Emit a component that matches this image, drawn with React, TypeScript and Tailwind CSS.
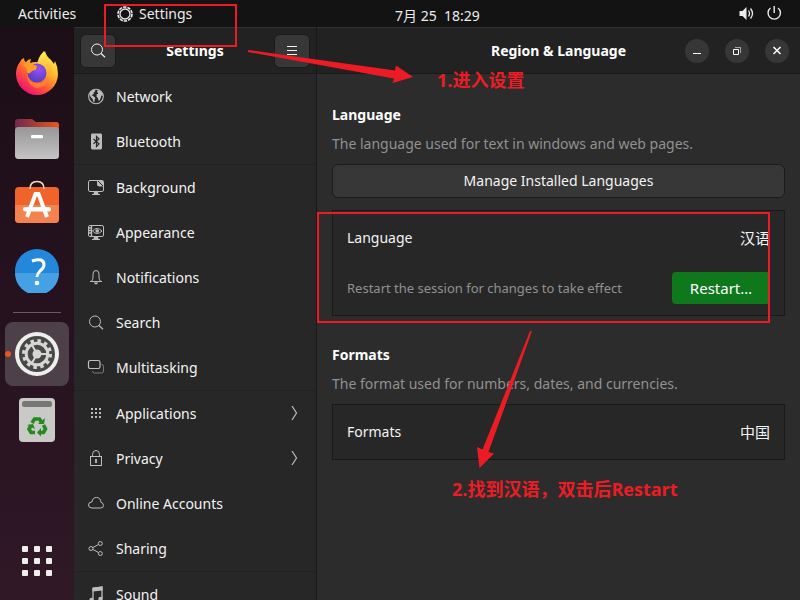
import React from "react";

type IconProps = { children: React.ReactNode; className?: string };

function Icon({ children, className = "" }: IconProps) {
  return (
    <svg
      viewBox="0 0 16 16"
      className={`size-4 shrink-0 ${className}`}
      fill="none"
      stroke="currentColor"
      strokeWidth="1"
      aria-hidden="true"
    >
      {children}
    </svg>
  );
}

const icons: Record<string, React.ReactNode> = {
  Network: (
    <>
      <circle cx="8" cy="7.5" r="7.3" strokeWidth="1.1" />
      <path
        fill="currentColor"
        stroke="none"
        d="M2.200 3 5 1 7.300 1.200 7 2.700 5.500 3.500 5.900 5 4.300 5.500 4.200 6.800 6.300 7.800 7.400 9.300 6.600 10.700 6.500 13 5.300 12.700 4.600 10 2.800 8.300 1.800 6ZM9 1.500 11.500 1.300 14.200 4 14.800 7 13.200 6.500 12.900 8.400 11.800 11.300 10.600 11.800 9.900 9 8.700 8 8.500 5.600 10.300 4.700 9.500 3.500Z"
      />
    </>
  ),
  Bluetooth: (
    <>
      <rect x="3" y="-.500" width="11" height="16" rx="1.400" fill="currentColor" stroke="none" />
      <path d="M5.500 5 11 9.800 8.500 12.500V2.500L11 5 5.500 9.800" stroke="#272727" strokeWidth="1.200" />
    </>
  ),
  Background: (
    <>
      <path d="M9 .5H2Q.5.5.5 2v8Q.5 11.500 2 11.500h12q1.500 0 1.500-1.500V6" />
      <path d="M9 0h4.500Q16 0 16 2.500V6.500H11.500Q9 6.500 9 4Z" fill="currentColor" stroke="none" />
      <path d="m10 1 5 5" stroke="#272727" />
      <path d="M6 12h4l.5 2H12v1H4v-1h1.500Z" fill="currentColor" stroke="none" />
    </>
  ),
  Appearance: (
    <>
      <rect x=".5" y=".5" width="15" height="11" rx="1.500" />
      <path d="M3.500 1v10M1 3h2.500M1 5.500h2.500M1 8h2.500" strokeWidth="1.300" />
      <path d="M4.500 6Q9 1 14 6 9 11 4.500 6Z" />
      <circle cx="9.200" cy="6" r="1.800" fill="currentColor" stroke="none" />
      <path d="M6 12h4l.5 2H12v1H4v-1h1.500Z" fill="currentColor" stroke="none" />
    </>
  ),
  Notifications: (
    <>
      <path d="M2 11.500h12M3.500 11.500Q5 9.500 5 7V4Q5 .5 8 .5t3 3.500v3q0 2.500 1.500 4.500" />
      <path d="M6 12.500h4Q9.500 14.500 8 14.500T6 12.500Z" fill="currentColor" stroke="none" />
    </>
  ),
  Search: (
    <>
      <circle cx="7" cy="6.500" r="5.500" />
      <path d="m11 10.500 4 3.800" strokeWidth="1.200" />
    </>
  ),
  Multitasking: (
    <>
      <rect x=".5" y=".5" width="11.500" height="8" rx="1.800" strokeWidth="1.200" />
      <path d="M13.500 4.500q2 0 2 2V11q0 2-2 2h-7q-2 0-2-2" opacity=".55" />
    </>
  ),
  Applications: (
    <path
      fill="currentColor"
      stroke="none"
      d="M3 2h2v2H3zM7 2h2v2H7zM11 2h2v2h-2zM3 6h2v2H3zM7 6h2v2H7zM11 6h2v2h-2zM3 10h2v2H3zM7 10h2v2H7zM11 10h2v2h-2z"
    />
  ),
  Privacy: (
    <>
      <path d="M4.500 5.500v-2Q4.500-.500 8-.500t3.500 4v2" />
      <rect x="2.500" y="5.500" width="11" height="9" />
      <path d="M8 8v4" strokeWidth="1.800" />
    </>
  ),
  "Online Accounts": (
    <path d="M4 12Q.5 12 .5 9 .5 6 4 5.900 4.500 1.500 8.500 1.500T13 6.300Q15.500 7 15.500 9.500T12.500 12Z" />
  ),
  Sharing: (
    <>
      <circle cx="3" cy="7.500" r="2" />
      <circle cx="12.300" cy="2.500" r="2" />
      <circle cx="12.300" cy="12.500" r="2" />
      <path d="m5 6.500 5.500-3M5 8.500l5.500 3" />
    </>
  ),
  Sound: (
    <>
      <path d="M5 1.500 14 0v12M5 1v12" strokeWidth="1.300" />
      <path d="M4.500.500 14.500-.500v4L4.500 4.500Z" fill="currentColor" stroke="none" />
      <circle cx="3.500" cy="13" r="2.200" fill="currentColor" stroke="none" />
      <circle cx="12.500" cy="12" r="2.200" fill="currentColor" stroke="none" />
    </>
  ),
};

const groups: string[][] = [
  ["Network", "Bluetooth"],
  ["Background", "Appearance", "Notifications", "Search", "Multitasking"],
  ["Applications", "Privacy", "Online Accounts", "Sharing"],
  ["Sound"],
];

const withSubmenu = ["Applications", "Privacy"];

function TopBar() {
  return (
    <header className="flex h-[27px] shrink-0 items-center bg-[#131313] pr-[18px] text-[#ececec]">
      <div className="flex w-[395px] items-center pl-[18px]">
        <button type="button" className="w-[99px] text-left">Activities</button>
        <button type="button" className="flex items-center gap-1.5">
          <Icon>
            <circle cx="8" cy="8" r="5" strokeWidth="1.300" />
            <circle cx="8" cy="8" r="7" strokeWidth="1.600" strokeDasharray="3.400 1" />
          </Icon>
          Settings
        </button>
      </div>
      <button type="button" className="whitespace-pre pt-1">7月 25  18:29</button>
      <button type="button" aria-label="System menu" className="ml-auto flex items-center gap-3">
        <Icon>
          <path d="M1.500 5h3l4-4v13l-4-4h-3Z" fill="currentColor" stroke="none" />
          <path d="M10.500 4.500q2 3 0 6M12.500 2.500q4 5 0 10" strokeWidth="1.300" />
        </Icon>
        <Icon>
          <path d="M4.500 2A6.200 6.200 0 1 0 12 2M8.200 0v7" strokeWidth="1.400" />
        </Icon>
      </button>
    </header>
  );
}

function FirefoxLogo() {
  return (
    <svg viewBox="0 0 44 44" className="size-11" aria-hidden="true">
      <defs>
        <linearGradient id="ffBody" x1=".85" y1=".1" x2=".25" y2=".95">
          <stop offset="0" stopColor="#fff04a" />
          <stop offset=".35" stopColor="#ffb22e" />
          <stop offset=".65" stopColor="#ff5b36" />
          <stop offset="1" stopColor="#ee1170" />
        </linearGradient>
        <radialGradient id="ffGlobe" cx=".6" cy=".3" r=".8">
          <stop offset="0" stopColor="#9b50f0" />
          <stop offset="1" stopColor="#4a3bc0" />
        </radialGradient>
        <linearGradient id="ffTail" x1=".5" y1="0" x2=".5" y2="1">
          <stop offset="0" stopColor="#fff251" />
          <stop offset="1" stopColor="#ff9f2c" />
        </linearGradient>
      </defs>
      <path
        d="M5 11q1-3 4-4 0 3 2 4 2-3 5-3l-1 4q6-2 10 0 0-7 5-12 1 5 6 9l3 4 1-3q3 6 3 13a21 21 0 0 1-42 0q0-7 4-12Z"
        fill="url(#ffBody)"
      />
      <path d="M29 0q0 6 5 10 4 4 3 10-3 7-9 6-3-5-6-11 0-8 7-15Z" fill="url(#ffTail)" />
      <circle cx="22" cy="22" r="9.500" fill="url(#ffGlobe)" />
      <path d="M8 14q5-4 14 1l-1 4q-4 0-6 3-3 1-3-1 1-4-4-7Z" fill="#ff9b27" />
      <path d="M12 22q1 10 11 10 8 0 11-6-1 10-12 11-10-2-10-15Z" fill="#ff8731" opacity=".8" />
    </svg>
  );
}

function FilesLogo() {
  return (
    <svg viewBox="0 0 44 44" className="size-11" aria-hidden="true">
      <defs>
        <linearGradient id="filesBack">
          <stop offset="0" stopColor="#6f2850" />
          <stop offset="1" stopColor="#ea561e" />
        </linearGradient>
        <linearGradient id="filesFront" x2="0" y2="1">
          <stop offset="0" stopColor="#979797" />
          <stop offset="1" stopColor="#c4c4c4" />
        </linearGradient>
      </defs>
      <path d="M0 16V5Q0 2 3 2h14l4 3h20q3 0 3 3v8Z" fill="url(#filesBack)" />
      <rect y="10" width="44" height="32" rx="3.500" fill="url(#filesFront)" />
      <rect x="16" y="18" width="12" height="3.200" rx="1" fill="#fff" />
    </svg>
  );
}

function SoftwareLogo() {
  return (
    <svg viewBox="0 0 44 44" className="size-11 overflow-visible" aria-hidden="true">
      <rect y="4" width="44" height="36" rx="4" fill="#f0642b" />
      <path d="M0 22h44v14q0 4-4 4H4q-4 0-4-4Z" fill="#f3824f" />
      <path d="M15 6Q15-1.500 22-1.500T29 6" fill="none" stroke="#f7d9b5" strokeWidth="1.600" />
      <path d="M12 34 20.500 11h3L32 34" fill="none" stroke="#fff" strokeWidth="4" />
      <rect x="8" y="24" width="28" height="4.500" rx="2" fill="#fff" />
    </svg>
  );
}

function HelpLogo() {
  return (
    <svg viewBox="0 0 44 44" className="size-11" aria-hidden="true">
      <circle cx="22" cy="22" r="22" fill="#2388da" />
      <path d="M0 24h44a22 22 0 0 1-44 0Z" fill="#45a0e4" />
      <path d="M17 12q12-4 12 4 0 3-4 6-3 3-3 6" fill="none" stroke="#fff" strokeWidth="3" />
      <circle cx="22" cy="34" r="2.300" fill="#fff" />
    </svg>
  );
}

function SettingsLogo() {
  return (
    <svg viewBox="0 0 44 44" className="size-11" aria-hidden="true">
      <circle cx="22" cy="22" r="22" fill="#eeeeec" />
      <circle cx="22" cy="22" r="18" fill="#484846" />
      <circle cx="22" cy="22" r="13.300" fill="none" stroke="#d6d6d4" strokeWidth="3.400" strokeDasharray="3.482 3.482" />
      <circle cx="22" cy="22" r="10.800" fill="none" stroke="#d6d6d4" strokeWidth="3" />
      <circle cx="22" cy="22" r="4.500" fill="#d6d6d4" />
      <path d="M22 22h10M22 22l-5-9M22 22l-5 9" stroke="#d6d6d4" strokeWidth="2" />
    </svg>
  );
}

function TrashLogo() {
  return (
    <svg viewBox="0 0 44 44" className="size-11" aria-hidden="true">
      <rect x="4" width="36" height="44" rx="4" fill="#c9c9c7" />
      <rect x="7" y="3" width="30" height="6" rx="2.500" fill="#777775" />
      <g fill="none" stroke="#26891f" strokeWidth="3.600">
        <path d="m17 25 2.500-4h5l2 3.500" />
        <path d="m28.500 27 2 4-2 3.500H25" />
        <path d="M20 34.500h-4l-2-3.500 2-3.500" />
      </g>
      <g fill="#26891f">
        <path d="m23 26 6 0 1-6Z" />
        <path d="m26 30-4 4.500 4 4Z" />
        <path d="m12 27 6-1 2 5Z" />
      </g>
    </svg>
  );
}

function DockItem({ label, children }: { label: string; children: React.ReactNode }) {
  return (
    <button type="button" aria-label={label} className="flex h-[66px] w-16 shrink-0 items-center justify-center">
      {children}
    </button>
  );
}

function Dock() {
  return (
    <nav
      aria-label="Dock"
      className="flex w-[74px] shrink-0 flex-col items-center bg-linear-to-b from-[#1b0e16] via-[#26121f] to-[#301827] pt-[13px]"
    >
      <DockItem label="Firefox"><FirefoxLogo /></DockItem>
      <DockItem label="Files"><FilesLogo /></DockItem>
      <DockItem label="Ubuntu Software"><SoftwareLogo /></DockItem>
      <DockItem label="Help"><HelpLogo /></DockItem>
      <div className="mt-2 mb-[9px] h-px w-12 bg-[#665b62]" />
      <button
        type="button"
        aria-label="Settings"
        className="relative mb-px flex size-16 shrink-0 items-center justify-center rounded-lg bg-[#4e4049]"
      >
        <span className="absolute left-0 size-1.5 rounded-full bg-[#e95420]" />
        <SettingsLogo />
      </button>
      <DockItem label="Trash"><TrashLogo /></DockItem>
      <button type="button" aria-label="Show applications" className="mt-auto mb-6 grid grid-cols-3 gap-1.5">
        {Array.from({ length: 9 }, (_, i) => (
          <span key={i} className="size-1.5 rounded-[1px] bg-[#eeeeec]" />
        ))}
      </button>
    </nav>
  );
}

const headerButton =
  "flex h-[34px] w-9 items-center justify-center rounded-md border border-[#1b1b1b] bg-[#373737] text-[#f1f1f1]";

function Sidebar() {
  return (
    <aside className="flex w-[243px] shrink-0 flex-col border-r border-[#191919] bg-[#272727]">
      <div className="flex h-[47px] shrink-0 items-center justify-between border-t border-b border-t-[#333333] border-b-[#191919] bg-[#222222] px-1.5">
        <button type="button" aria-label="Search" className={headerButton}>
          <Icon>{icons.Search}</Icon>
        </button>
        <h1 className="font-bold text-white">Settings</h1>
        <button type="button" aria-label="Menu" className={headerButton}>
          <Icon><path d="M3 3.500h10M3 7.500h10M3 11.500h10" /></Icon>
        </button>
      </div>
      <nav aria-label="Settings" className="min-h-0 flex-1 divide-y divide-[#222222] overflow-hidden">
        {groups.map((group) => (
          <ul key={group[0]}>
            {group.map((name) => (
              <li key={name}>
                <button type="button" className="flex h-[45px] w-full items-center gap-3 px-3.5 text-left text-[#f3f3f3]">
                  <Icon className="overflow-visible text-[#bdbdbd]">{icons[name]}</Icon>
                  <span className="flex-1">{name}</span>
                  {withSubmenu.includes(name) && (
                    <Icon className="text-[#bdbdbd]"><path d="m6 0 4.500 7L6 14" strokeWidth="1.200" /></Icon>
                  )}
                </button>
              </li>
            ))}
          </ul>
        ))}
      </nav>
    </aside>
  );
}

const windowButton =
  "flex size-6 items-center justify-center rounded-full bg-[#373737] text-white";

function Panel() {
  return (
    <main className="min-w-0 flex-1 bg-[#2c2c2c] text-[#f3f3f3]">
      <div className="grid h-[47px] grid-cols-[1fr_auto_1fr] items-center border-t border-b border-t-[#333333] border-b-[#191919] bg-[#222222]">
        <h2 className="col-start-2 font-bold text-white">Region &amp; Language</h2>
        <div className="flex justify-end gap-4 pr-[11px]">
          <button type="button" aria-label="Minimize" className={windowButton}>
            <Icon><path d="M4 10.500h8" /></Icon>
          </button>
          <button type="button" aria-label="Restore" className={windowButton}>
            <Icon>
              <path d="M4.500 6.500h5v5h-5z" />
              <path d="M6 4.500h5.500V10" opacity=".55" />
            </Icon>
          </button>
          <button type="button" aria-label="Close" className={windowButton}>
            <Icon><path d="m4.500 4 7 7m0-7-7 7" strokeWidth="1.500" /></Icon>
          </button>
        </div>
      </div>
      <div className="px-[15px] pt-[30px]">
        <section>
          <h3 className="font-bold leading-[22px] text-white">Language</h3>
          <p className="mt-2 leading-5 text-[#919191]">The language used for text in windows and web pages.</p>
          <button type="button" className="mt-2.5 h-[34px] w-full rounded-md border border-[#1b1b1b] bg-[#373737]">
            Manage Installed Languages
          </button>
          <div className="mt-3 border border-[#191919] bg-[#272727] pb-[11px]">
            <button type="button" className="flex h-[54px] w-full items-center justify-between px-3.5">
              <span>Language</span>
              <span className="text-[15px]">汉语</span>
            </button>
            <div className="flex items-center justify-between px-3.5 pt-[7px]">
              <span className="text-[13px] text-[#919191]">Restart the session for changes to take effect</span>
              <button type="button" className="h-8 w-[98px] rounded bg-[#0f771c] text-[15px] text-white">Restart…</button>
            </div>
          </div>
        </section>
        <section className="mt-7">
          <h3 className="font-bold leading-[22px] text-white">Formats</h3>
          <p className="mt-2 leading-5 text-[#919191]">The format used for numbers, dates, and currencies.</p>
          <button
            type="button"
            className="mt-2.5 flex h-14 w-full items-center justify-between border border-[#191919] bg-[#272727] px-3.5"
          >
            <span>Formats</span>
            <span className="text-[15px]">中国</span>
          </button>
        </section>
      </div>
    </main>
  );
}

function Annotations() {
  return (
    <div className="pointer-events-none absolute top-0 left-0 h-[600px] w-[800px] font-['Open_Sans','Noto_Sans_CJK_SC',sans-serif] text-[18px] leading-6 font-bold text-[#ed1c24]">
      <svg viewBox="0 0 800 600" className="absolute inset-0 size-full" aria-hidden="true">
        <g fill="none" stroke="#ed1c24" strokeWidth="2">
          <rect x="105" y="5" width="131" height="41" />
          <rect x="318" y="213" width="451" height="109" />
        </g>
        <path
          fill="#ed1c24"
          d="M248 50v2L394 78.500 392.500 83 413 77 396 65.500 395 70.500ZM532 331h-2L482.500 449.500 477 447 479.500 468 494 453.500 488.500 452Z"
        />
      </svg>
      <p className="absolute top-[68px] left-[437px]">1.进入设置</p>
      <p className="absolute top-[477px] left-[452px]">2.找到汉语，双击后Restart</p>
    </div>
  );
}

export default function App() {
  return (
    <div className="relative flex h-screen flex-col overflow-hidden bg-[#131313] font-['Noto_Sans','Noto_Sans_CJK_SC',sans-serif] text-[14px] leading-5">
      <TopBar />
      <div className="flex min-h-0 flex-1">
        <Dock />
        <Sidebar />
        <Panel />
      </div>
      <Annotations />
    </div>
  );
}
